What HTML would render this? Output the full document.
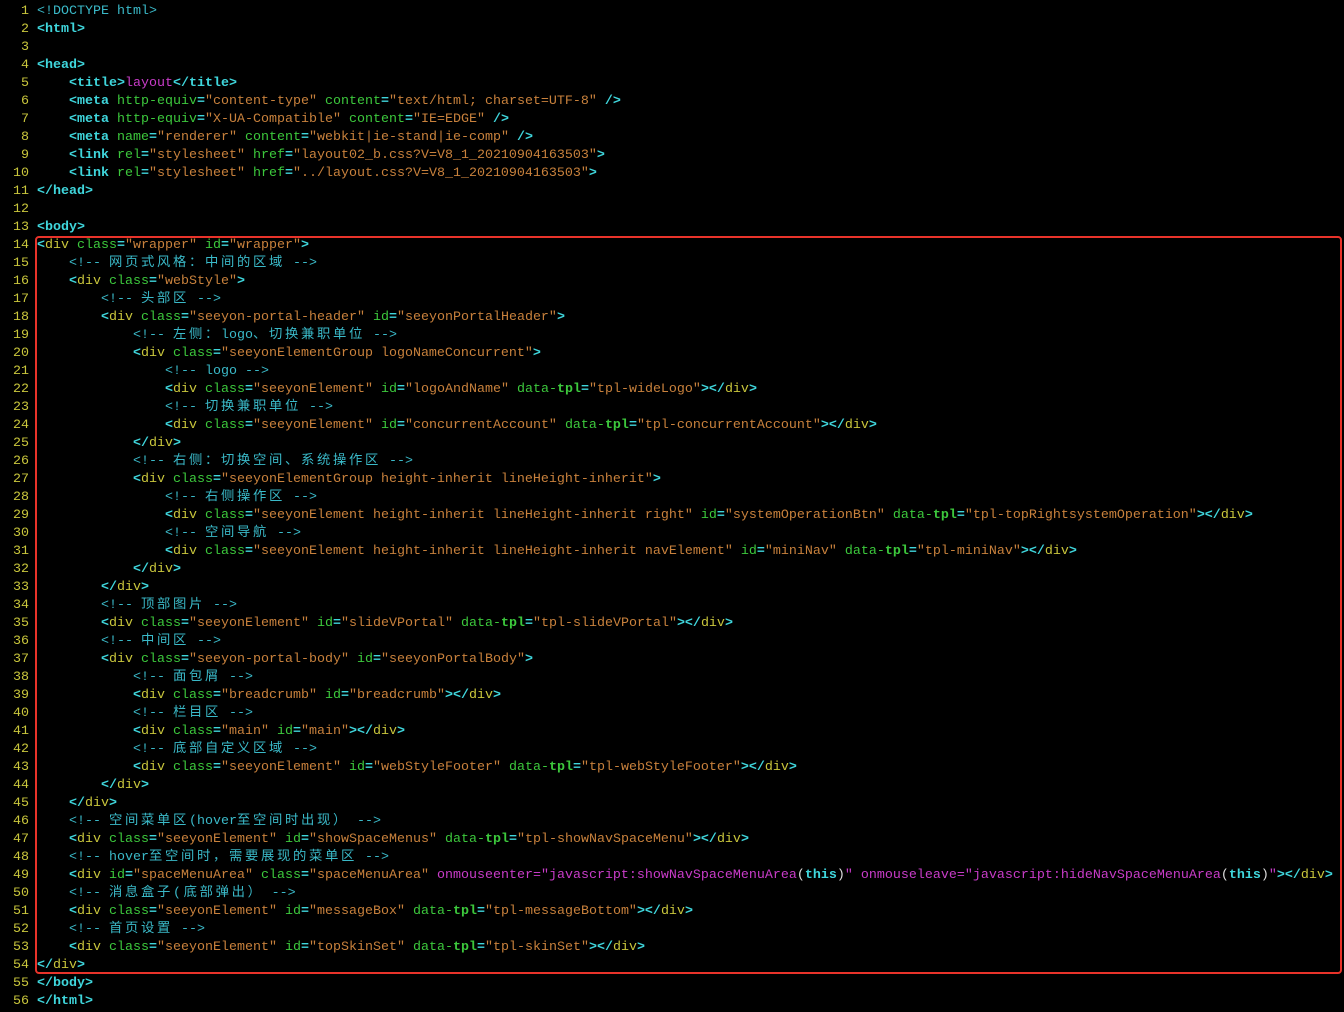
<!DOCTYPE html>
<html><head><meta charset="utf-8"><style>
html,body{margin:0;background:#000;width:1344px;height:1012px;overflow:hidden}
#ed{position:absolute;left:0;top:3px;font-family:"Liberation Mono","Noto Sans CJK SC",monospace;font-size:13.33px;line-height:18px;color:#ddd}
.l{height:18px;white-space:pre}
.n{display:inline-block;width:29px;text-align:right;color:#c9c63c;margin-right:8px}
b{color:#3fd6dc;font-weight:bold}
x-t{color:#c9c63c}
x-h{color:#3fd6dc;font-weight:bold}
x-a{color:#3cc83c}
x-s{color:#c8813c}
x-c{color:#3ab9c8}
x-m{color:#c83cc8}
x-k{letter-spacing:2.67px}
#box{position:absolute;left:35px;top:236px;width:1303px;height:734px;border:2px solid #e8332a;border-radius:4px}
</style></head><body>
<div id="box"></div>
<div id="ed">
<div class="l"><span class="n">1</span><x-c>&lt;!DOCTYPE html&gt;</x-c></div>
<div class="l"><span class="n">2</span><b>&lt;</b><x-h>html</x-h><b>&gt;</b></div>
<div class="l"><span class="n">3</span></div>
<div class="l"><span class="n">4</span><b>&lt;</b><x-h>head</x-h><b>&gt;</b></div>
<div class="l"><span class="n">5</span>    <b>&lt;</b><x-h>title</x-h><b>&gt;</b><x-m>layout</x-m><b>&lt;/</b><x-h>title</x-h><b>&gt;</b></div>
<div class="l"><span class="n">6</span>    <b>&lt;</b><x-h>meta</x-h> <x-a>http-equiv</x-a><b>=</b><x-s>"content-type"</x-s> <x-a>content</x-a><b>=</b><x-s>"text/html; charset=UTF-8"</x-s> <b>/&gt;</b></div>
<div class="l"><span class="n">7</span>    <b>&lt;</b><x-h>meta</x-h> <x-a>http-equiv</x-a><b>=</b><x-s>"X-UA-Compatible"</x-s> <x-a>content</x-a><b>=</b><x-s>"IE=EDGE"</x-s> <b>/&gt;</b></div>
<div class="l"><span class="n">8</span>    <b>&lt;</b><x-h>meta</x-h> <x-a>name</x-a><b>=</b><x-s>"renderer"</x-s> <x-a>content</x-a><b>=</b><x-s>"webkit|ie-stand|ie-comp"</x-s> <b>/&gt;</b></div>
<div class="l"><span class="n">9</span>    <b>&lt;</b><x-h>link</x-h> <x-a>rel</x-a><b>=</b><x-s>"stylesheet"</x-s> <x-a>href</x-a><b>=</b><x-s>"layout02_b.css?V=V8_1_20210904163503"</x-s><b>&gt;</b></div>
<div class="l"><span class="n">10</span>    <b>&lt;</b><x-h>link</x-h> <x-a>rel</x-a><b>=</b><x-s>"stylesheet"</x-s> <x-a>href</x-a><b>=</b><x-s>"../layout.css?V=V8_1_20210904163503"</x-s><b>&gt;</b></div>
<div class="l"><span class="n">11</span><b>&lt;/</b><x-h>head</x-h><b>&gt;</b></div>
<div class="l"><span class="n">12</span></div>
<div class="l"><span class="n">13</span><b>&lt;</b><x-h>body</x-h><b>&gt;</b></div>
<div class="l"><span class="n">14</span><b>&lt;</b><x-t>div</x-t> <x-a>class</x-a><b>=</b><x-s>"wrapper"</x-s> <x-a>id</x-a><b>=</b><x-s>"wrapper"</x-s><b>&gt;</b></div>
<div class="l"><span class="n">15</span>    <x-c>&lt;!-- <x-k>网页式风格：中间的区域</x-k> --&gt;</x-c></div>
<div class="l"><span class="n">16</span>    <b>&lt;</b><x-t>div</x-t> <x-a>class</x-a><b>=</b><x-s>"webStyle"</x-s><b>&gt;</b></div>
<div class="l"><span class="n">17</span>        <x-c>&lt;!-- <x-k>头部区</x-k> --&gt;</x-c></div>
<div class="l"><span class="n">18</span>        <b>&lt;</b><x-t>div</x-t> <x-a>class</x-a><b>=</b><x-s>"seeyon-portal-header"</x-s> <x-a>id</x-a><b>=</b><x-s>"seeyonPortalHeader"</x-s><b>&gt;</b></div>
<div class="l"><span class="n">19</span>            <x-c>&lt;!-- <x-k>左侧：</x-k>logo<x-k>、切换兼职单位</x-k> --&gt;</x-c></div>
<div class="l"><span class="n">20</span>            <b>&lt;</b><x-t>div</x-t> <x-a>class</x-a><b>=</b><x-s>"seeyonElementGroup logoNameConcurrent"</x-s><b>&gt;</b></div>
<div class="l"><span class="n">21</span>                <x-c>&lt;!-- logo --&gt;</x-c></div>
<div class="l"><span class="n">22</span>                <b>&lt;</b><x-t>div</x-t> <x-a>class</x-a><b>=</b><x-s>"seeyonElement"</x-s> <x-a>id</x-a><b>=</b><x-s>"logoAndName"</x-s> <x-a>data-<b style="color:#3cc83c">tpl</b></x-a><b>=</b><x-s>"tpl-wideLogo"</x-s><b>&gt;&lt;/</b><x-t>div</x-t><b>&gt;</b></div>
<div class="l"><span class="n">23</span>                <x-c>&lt;!-- <x-k>切换兼职单位</x-k> --&gt;</x-c></div>
<div class="l"><span class="n">24</span>                <b>&lt;</b><x-t>div</x-t> <x-a>class</x-a><b>=</b><x-s>"seeyonElement"</x-s> <x-a>id</x-a><b>=</b><x-s>"concurrentAccount"</x-s> <x-a>data-<b style="color:#3cc83c">tpl</b></x-a><b>=</b><x-s>"tpl-concurrentAccount"</x-s><b>&gt;&lt;/</b><x-t>div</x-t><b>&gt;</b></div>
<div class="l"><span class="n">25</span>            <b>&lt;/</b><x-t>div</x-t><b>&gt;</b></div>
<div class="l"><span class="n">26</span>            <x-c>&lt;!-- <x-k>右侧：切换空间、系统操作区</x-k> --&gt;</x-c></div>
<div class="l"><span class="n">27</span>            <b>&lt;</b><x-t>div</x-t> <x-a>class</x-a><b>=</b><x-s>"seeyonElementGroup height-inherit lineHeight-inherit"</x-s><b>&gt;</b></div>
<div class="l"><span class="n">28</span>                <x-c>&lt;!-- <x-k>右侧操作区</x-k> --&gt;</x-c></div>
<div class="l"><span class="n">29</span>                <b>&lt;</b><x-t>div</x-t> <x-a>class</x-a><b>=</b><x-s>"seeyonElement height-inherit lineHeight-inherit right"</x-s> <x-a>id</x-a><b>=</b><x-s>"systemOperationBtn"</x-s> <x-a>data-<b style="color:#3cc83c">tpl</b></x-a><b>=</b><x-s>"tpl-topRightsystemOperation"</x-s><b>&gt;&lt;/</b><x-t>div</x-t><b>&gt;</b></div>
<div class="l"><span class="n">30</span>                <x-c>&lt;!-- <x-k>空间导航</x-k> --&gt;</x-c></div>
<div class="l"><span class="n">31</span>                <b>&lt;</b><x-t>div</x-t> <x-a>class</x-a><b>=</b><x-s>"seeyonElement height-inherit lineHeight-inherit navElement"</x-s> <x-a>id</x-a><b>=</b><x-s>"miniNav"</x-s> <x-a>data-<b style="color:#3cc83c">tpl</b></x-a><b>=</b><x-s>"tpl-miniNav"</x-s><b>&gt;&lt;/</b><x-t>div</x-t><b>&gt;</b></div>
<div class="l"><span class="n">32</span>            <b>&lt;/</b><x-t>div</x-t><b>&gt;</b></div>
<div class="l"><span class="n">33</span>        <b>&lt;/</b><x-t>div</x-t><b>&gt;</b></div>
<div class="l"><span class="n">34</span>        <x-c>&lt;!-- <x-k>顶部图片</x-k> --&gt;</x-c></div>
<div class="l"><span class="n">35</span>        <b>&lt;</b><x-t>div</x-t> <x-a>class</x-a><b>=</b><x-s>"seeyonElement"</x-s> <x-a>id</x-a><b>=</b><x-s>"slideVPortal"</x-s> <x-a>data-<b style="color:#3cc83c">tpl</b></x-a><b>=</b><x-s>"tpl-slideVPortal"</x-s><b>&gt;&lt;/</b><x-t>div</x-t><b>&gt;</b></div>
<div class="l"><span class="n">36</span>        <x-c>&lt;!-- <x-k>中间区</x-k> --&gt;</x-c></div>
<div class="l"><span class="n">37</span>        <b>&lt;</b><x-t>div</x-t> <x-a>class</x-a><b>=</b><x-s>"seeyon-portal-body"</x-s> <x-a>id</x-a><b>=</b><x-s>"seeyonPortalBody"</x-s><b>&gt;</b></div>
<div class="l"><span class="n">38</span>            <x-c>&lt;!-- <x-k>面包屑</x-k> --&gt;</x-c></div>
<div class="l"><span class="n">39</span>            <b>&lt;</b><x-t>div</x-t> <x-a>class</x-a><b>=</b><x-s>"breadcrumb"</x-s> <x-a>id</x-a><b>=</b><x-s>"breadcrumb"</x-s><b>&gt;&lt;/</b><x-t>div</x-t><b>&gt;</b></div>
<div class="l"><span class="n">40</span>            <x-c>&lt;!-- <x-k>栏目区</x-k> --&gt;</x-c></div>
<div class="l"><span class="n">41</span>            <b>&lt;</b><x-t>div</x-t> <x-a>class</x-a><b>=</b><x-s>"main"</x-s> <x-a>id</x-a><b>=</b><x-s>"main"</x-s><b>&gt;&lt;/</b><x-t>div</x-t><b>&gt;</b></div>
<div class="l"><span class="n">42</span>            <x-c>&lt;!-- <x-k>底部自定义区域</x-k> --&gt;</x-c></div>
<div class="l"><span class="n">43</span>            <b>&lt;</b><x-t>div</x-t> <x-a>class</x-a><b>=</b><x-s>"seeyonElement"</x-s> <x-a>id</x-a><b>=</b><x-s>"webStyleFooter"</x-s> <x-a>data-<b style="color:#3cc83c">tpl</b></x-a><b>=</b><x-s>"tpl-webStyleFooter"</x-s><b>&gt;&lt;/</b><x-t>div</x-t><b>&gt;</b></div>
<div class="l"><span class="n">44</span>        <b>&lt;/</b><x-t>div</x-t><b>&gt;</b></div>
<div class="l"><span class="n">45</span>    <b>&lt;/</b><x-t>div</x-t><b>&gt;</b></div>
<div class="l"><span class="n">46</span>    <x-c>&lt;!-- <x-k>空间菜单区</x-k>(hover<x-k>至空间时出现）</x-k> --&gt;</x-c></div>
<div class="l"><span class="n">47</span>    <b>&lt;</b><x-t>div</x-t> <x-a>class</x-a><b>=</b><x-s>"seeyonElement"</x-s> <x-a>id</x-a><b>=</b><x-s>"showSpaceMenus"</x-s> <x-a>data-<b style="color:#3cc83c">tpl</b></x-a><b>=</b><x-s>"tpl-showNavSpaceMenu"</x-s><b>&gt;&lt;/</b><x-t>div</x-t><b>&gt;</b></div>
<div class="l"><span class="n">48</span>    <x-c>&lt;!-- hover<x-k>至空间时，需要展现的菜单区</x-k> --&gt;</x-c></div>
<div class="l"><span class="n">49</span>    <b>&lt;</b><x-t>div</x-t> <x-a>id</x-a><b>=</b><x-s>"spaceMenuArea"</x-s> <x-a>class</x-a><b>=</b><x-s>"spaceMenuArea"</x-s> <x-m>onmouseenter</x-m><x-m>="javascript:showNavSpaceMenuArea</x-m>(<b>this</b>)<x-m>"</x-m> <x-m>onmouseleave="javascript:hideNavSpaceMenuArea</x-m>(<b>this</b>)<x-m>"</x-m><b>&gt;&lt;/</b><x-t>div</x-t><b>&gt;</b></div>
<div class="l"><span class="n">50</span>    <x-c>&lt;!-- <x-k>消息盒子(底部弹出）</x-k> --&gt;</x-c></div>
<div class="l"><span class="n">51</span>    <b>&lt;</b><x-t>div</x-t> <x-a>class</x-a><b>=</b><x-s>"seeyonElement"</x-s> <x-a>id</x-a><b>=</b><x-s>"messageBox"</x-s> <x-a>data-<b style="color:#3cc83c">tpl</b></x-a><b>=</b><x-s>"tpl-messageBottom"</x-s><b>&gt;&lt;/</b><x-t>div</x-t><b>&gt;</b></div>
<div class="l"><span class="n">52</span>    <x-c>&lt;!-- <x-k>首页设置</x-k> --&gt;</x-c></div>
<div class="l"><span class="n">53</span>    <b>&lt;</b><x-t>div</x-t> <x-a>class</x-a><b>=</b><x-s>"seeyonElement"</x-s> <x-a>id</x-a><b>=</b><x-s>"topSkinSet"</x-s> <x-a>data-<b style="color:#3cc83c">tpl</b></x-a><b>=</b><x-s>"tpl-skinSet"</x-s><b>&gt;&lt;/</b><x-t>div</x-t><b>&gt;</b></div>
<div class="l"><span class="n">54</span><b>&lt;/</b><x-t>div</x-t><b>&gt;</b></div>
<div class="l"><span class="n">55</span><b>&lt;/</b><x-h>body</x-h><b>&gt;</b></div>
<div class="l"><span class="n">56</span><b>&lt;/</b><x-h>html</x-h><b>&gt;</b></div>
</div>
</body></html>
